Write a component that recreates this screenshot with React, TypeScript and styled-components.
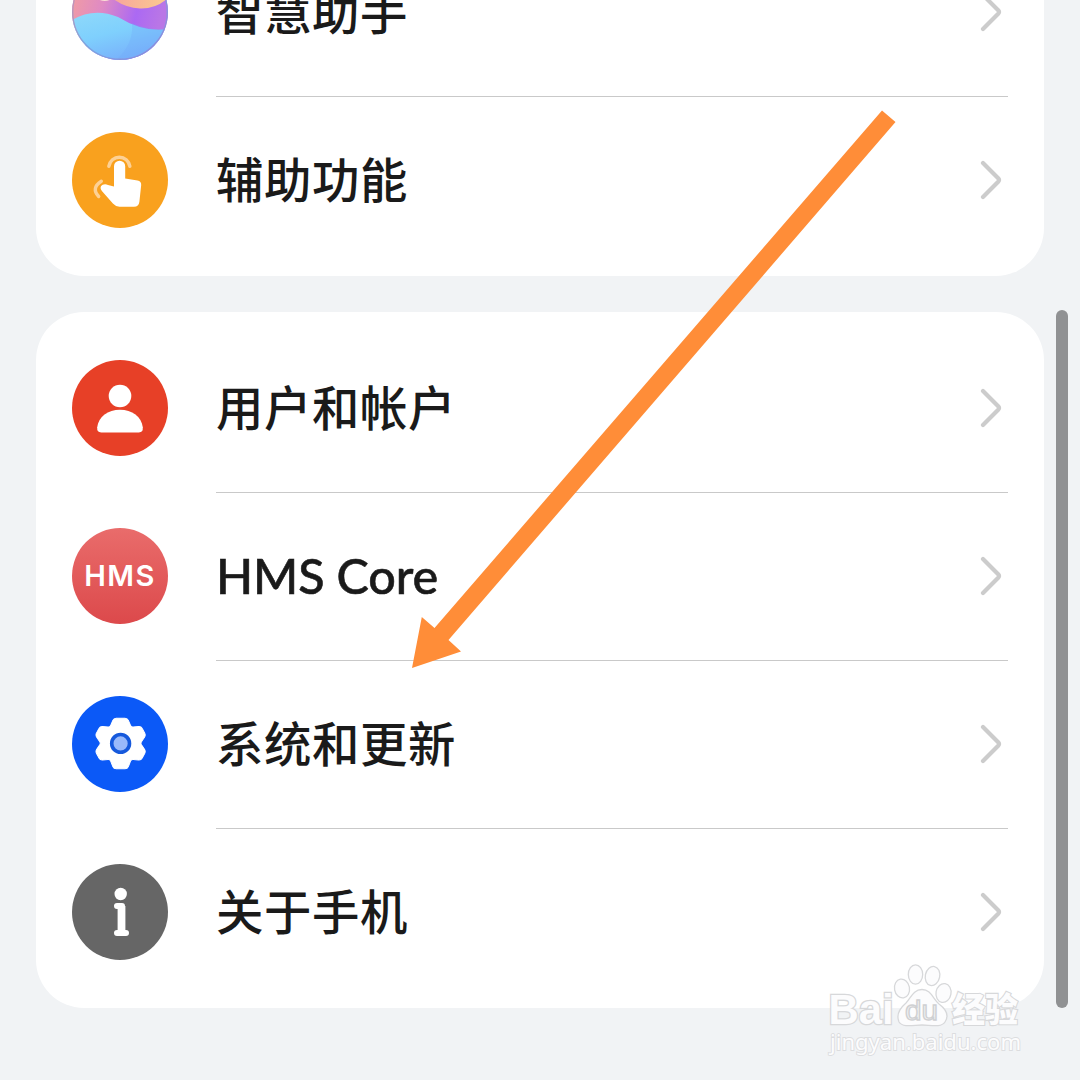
import React from "react";
import styled, { createGlobalStyle } from "styled-components";

const Global = createGlobalStyle`
  body {
    margin: 0;
    background: #f1f3f5;
  }
`;

const Screen = styled.main`
  position: relative;
  box-sizing: border-box;
  width: 1080px;
  height: 1080px;
  padding: 0 36px;
  display: flex;
  flex-direction: column;
  gap: 36px;
  overflow: hidden;
  background: #f1f3f5;
  color: #1a1a1a;
  font-family: Lato, "Noto Sans CJK SC", sans-serif;
`;

const Card = styled.section<{ $scrolled?: boolean }>`
  flex: none;
  margin-top: ${(p) => (p.$scrolled ? "-84px" : "0")};
  padding: 12px 36px;
  border-radius: 48px;
  background: #fff;
`;

const Row = styled.div`
  display: flex;
  align-items: center;
  gap: 48px;
  height: 168px;
`;

const Badge = styled.div<{ $fill: string }>`
  flex: none;
  display: flex;
  align-items: center;
  justify-content: center;
  width: 96px;
  height: 96px;
  border-radius: 50%;
  overflow: hidden;
  background: ${(p) => p.$fill};

  svg {
    display: block;
  }
`;

const Body = styled.div<{ $divided: boolean }>`
  flex: 1;
  box-sizing: border-box;
  height: 169px;
  margin-bottom: -1px;
  display: flex;
  align-items: center;
  justify-content: space-between;
  padding-right: 6px;
  border-bottom: 1px solid ${(p) => (p.$divided ? "#c9c9c9" : "transparent")};
`;

const Label = styled.span<{ $latin?: boolean }>`
  font-size: ${(p) => (p.$latin ? "48.5px" : "47.4px")};
  font-weight: 500;
  line-height: 72px;
  letter-spacing: ${(p) => (p.$latin ? "-0.1px" : "0.6px")};
  padding-bottom: ${(p) => (p.$latin ? "2px" : "0")};
  -webkit-text-stroke: ${(p) => (p.$latin ? "0.6px #1a1a1a" : "0")};
  white-space: nowrap;
`;

const HmsText = styled.span`
  font: 600 29px/32px Inter, sans-serif;
  letter-spacing: 1.5px;
  padding-bottom: 1px;
  color: #fff;
`;

const ScrollThumb = styled.div`
  position: absolute;
  top: 310px;
  right: 12px;
  width: 12px;
  height: 698px;
  border-radius: 6px;
  background: #909193;
`;

const Arrow = styled.svg`
  position: absolute;
  left: 0;
  top: 0;
  pointer-events: none;
`;

const Watermark = styled.svg`
  position: absolute;
  left: 820px;
  top: 955px;
`;

const Chevron = () => (
  <svg width="22" height="40" viewBox="0 0 22 40" fill="none" stroke="#cccccc" strokeWidth="4.2" strokeLinecap="round" strokeLinejoin="round">
    <path d="M3 3 18.2 18.3Q19.8 20 18.2 21.7L3 37" />
  </svg>
);

const AssistantIcon = () => (
  <svg width="96" height="96" viewBox="0 0 96 96">
    <defs>
      <linearGradient id="sky" x1="0" y1="0" x2="0.5" y2="1">
        <stop offset="0" stopColor="#8fd9fa" />
        <stop offset="0.5" stopColor="#7fd0fd" />
        <stop offset="1" stopColor="#78b1fb" />
      </linearGradient>
      <linearGradient id="violet" x1="0" y1="0" x2="1" y2="0.25">
        <stop offset="0" stopColor="#f5a09c" />
        <stop offset="0.4" stopColor="#df8ac4" />
        <stop offset="0.75" stopColor="#ab69f3" />
        <stop offset="1" stopColor="#b976e6" />
      </linearGradient>
      <linearGradient id="peach" x1="0" y1="0" x2="1" y2="0">
        <stop offset="0" stopColor="#f7a59c" />
        <stop offset="1" stopColor="#fbcb8f" />
      </linearGradient>
      <linearGradient id="rim" x1="0" y1="0" x2="1" y2="1">
        <stop offset="0" stopColor="#e98aa0" />
        <stop offset="0.5" stopColor="#7aa5df" />
        <stop offset="1" stopColor="#9483d8" />
      </linearGradient>
    </defs>
    <rect width="96" height="96" fill="url(#violet)" />
    <path d="M40 34Q53 44 68 44.5Q84 45 96 34V0H40Z" fill="url(#peach)" />
    <path d="M24 34Q33 40 41 34V0H24Z" fill="#fbdcd6" />
    <path d="M0 56Q22 43 46 53Q72 69 96 65V96H0Z" fill="url(#sky)" />
    <path d="M60 59Q62 80 44 96H82L96 65Q78 67 60 59Z" fill="#70aafa" opacity=".3" />
    <circle cx="48" cy="48" r="47.3" fill="none" stroke="url(#rim)" strokeWidth="1.4" />
  </svg>
);

const TouchIcon = () => (
  <svg width="96" height="96" viewBox="0 0 96 96" fill="none">
    <path d="M36.8 34.4A10.7 11 0 0 1 57.9 34.4" stroke="#fdd195" strokeWidth="3.4" strokeLinecap="round" />
    <path d="M29.3 49.2Q18.8 56 26.7 64.5" stroke="#fdd195" strokeWidth="3.4" strokeLinecap="round" />
    <path d="M42 34.3a5.6 5.6 0 0 1 11.2 0V46.5L65.5 48.4Q69.4 49.1 69.2 53L67.4 69.7Q66.8 74.7 62 74.7H47.5Q43.7 74.7 40.9 71.5L30.1 59.3C26 54.5 31.2 50.8 36 53L42 54.6Z" fill="#fff" />
  </svg>
);

const UserIcon = () => (
  <svg width="96" height="96" viewBox="0 0 96 96" fill="#fff">
    <circle cx="48" cy="36" r="11.3" />
    <path d="M25.2 67.2C26.5 56.5 36 49.7 48 49.7S69.5 56.5 70.8 67.2Q71.2 72.4 66.8 72.4H29.2Q24.8 72.4 25.2 67.2Z" />
  </svg>
);

const GearIcon = () => (
  <svg width="96" height="96" viewBox="0 0 96 96">
    <path
      transform="translate(48.6 47.4) scale(.975 1.03) translate(-48.5 -47.4)"
      d="M44 23H53Q55.5 23 56.5 25.2L58.7 30Q59.5 31.7 61.4 31.5L67 31Q69.5 30.8 70.7 33L73.2 37.3Q74.4 39.4 73 41.4L69.9 45.8Q68.9 47.3 69.9 48.8L73 53.2Q74.4 55.2 73.2 57.3L70.7 61.6Q69.5 63.8 67 63.6L61.4 63.1Q59.5 62.9 58.7 64.6L56.5 69.8Q55.5 72 53 72H44Q41.5 72 40.5 69.8L38.3 64.6Q37.5 62.9 35.6 63.1L30 63.6Q27.5 63.8 26.3 61.6L23.8 57.3Q22.6 55.2 24 53.2L27.1 48.8Q28.1 47.3 27.1 45.8L24 41.4Q22.6 39.4 23.8 37.3L26.3 33Q27.5 30.8 30 31L35.6 31.5Q37.5 31.7 38.3 30L40.5 25.2Q41.5 23 44 23Z"
      fill="#fff"
      stroke="#fff"
      strokeWidth="1"
    />
    <circle cx="48.6" cy="47.4" r="8.9" fill="#9abafb" stroke="#1659dc" strokeWidth="3.6" />
  </svg>
);

const InfoIcon = () => (
  <svg width="96" height="96" viewBox="0 0 96 96" fill="none" stroke="#fff">
    <circle cx="48.7" cy="30" r="6.2" fill="#fff" stroke="none" />
    <path d="M45 42H50M45 69H54" strokeWidth="6" strokeLinecap="round" />
    <path d="M49.5 42V69" strokeWidth="7.8" />
  </svg>
);

type Item = { label: string; fill: string; icon: React.ReactNode; latin?: boolean };

const assistance: Item[] = [
  { label: "智慧助手", fill: "#b79af0", icon: <AssistantIcon /> },
  { label: "辅助功能", fill: "#f9a11e", icon: <TouchIcon /> },
];

const system: Item[] = [
  { label: "用户和帐户", fill: "#e74027", icon: <UserIcon /> },
  { label: "HMS Core", fill: "linear-gradient(#e96c6b, #dc494b)", icon: <HmsText>HMS</HmsText>, latin: true },
  { label: "系统和更新", fill: "#0b59f7", icon: <GearIcon /> },
  { label: "关于手机", fill: "#666", icon: <InfoIcon /> },
];

const SettingsCard = ({ items, scrolled }: { items: Item[]; scrolled?: boolean }) => (
  <Card $scrolled={scrolled}>
    {items.map((item, i) => (
      <Row key={item.label}>
        <Badge $fill={item.fill}>{item.icon}</Badge>
        <Body $divided={i < items.length - 1}>
          <Label $latin={item.latin}>{item.label}</Label>
          <Chevron />
        </Body>
      </Row>
    ))}
  </Card>
);

export default function App() {
  return (
    <>
      <Global />
      <Screen>
        <SettingsCard items={assistance} scrolled />
        <SettingsCard items={system} />
        <ScrollThumb />
        <Watermark width="220" height="110" viewBox="0 0 220 110" fill="#fcfcfd" stroke="#d7d8da" strokeWidth="1.3">
          <text x="8.5" y="69" fontFamily="Liberation Sans" fontWeight="700" fontSize="43" textLength="65" lengthAdjust="spacingAndGlyphs" paintOrder="stroke" strokeWidth="2.6">Bai</text>
          <ellipse cx="82" cy="33.5" rx="7.5" ry="9.5" transform="rotate(-10 82 33.5)" />
          <ellipse cx="95.5" cy="19.5" rx="7.2" ry="9.7" />
          <ellipse cx="112.5" cy="21" rx="7.2" ry="9.7" transform="rotate(12 112.5 21)" />
          <ellipse cx="123.5" cy="38" rx="7.5" ry="9.5" transform="rotate(10 123.5 38)" />
          <path d="M102 34.5C111 34.5 113 44 119 49C127 55 129 61 125 67C121 73 110 70 102 70S83 73 79 67C76 60 79 54 86 48C91 43 93 34.5 102 34.5Z" />
          <text x="85" y="65" fontFamily="Liberation Sans" fontSize="27" textLength="33" lengthAdjust="spacingAndGlyphs" fill="#f1f2f3" stroke="#cfd0d2">du</text>
          <text x="132" y="67" fontFamily="Noto Sans CJK SC" fontWeight="900" fontSize="34" textLength="66" lengthAdjust="spacingAndGlyphs" paintOrder="stroke" strokeWidth="2.2">经验</text>
          <text x="10" y="95" fontFamily="Noto Sans" fontSize="22" textLength="191" lengthAdjust="spacingAndGlyphs" paintOrder="stroke" stroke="#dcdddf" strokeWidth="1.8">jingyan.baidu.com</text>
        </Watermark>
        <Arrow width="1080" height="1080" viewBox="0 0 1080 1080">
          <path d="M882 110.5 895.5 122 448.5 640 461 651.5 412 668 421.8 617 434.5 628Z" fill="#ff8d38" />
        </Arrow>
      </Screen>
    </>
  );
}
